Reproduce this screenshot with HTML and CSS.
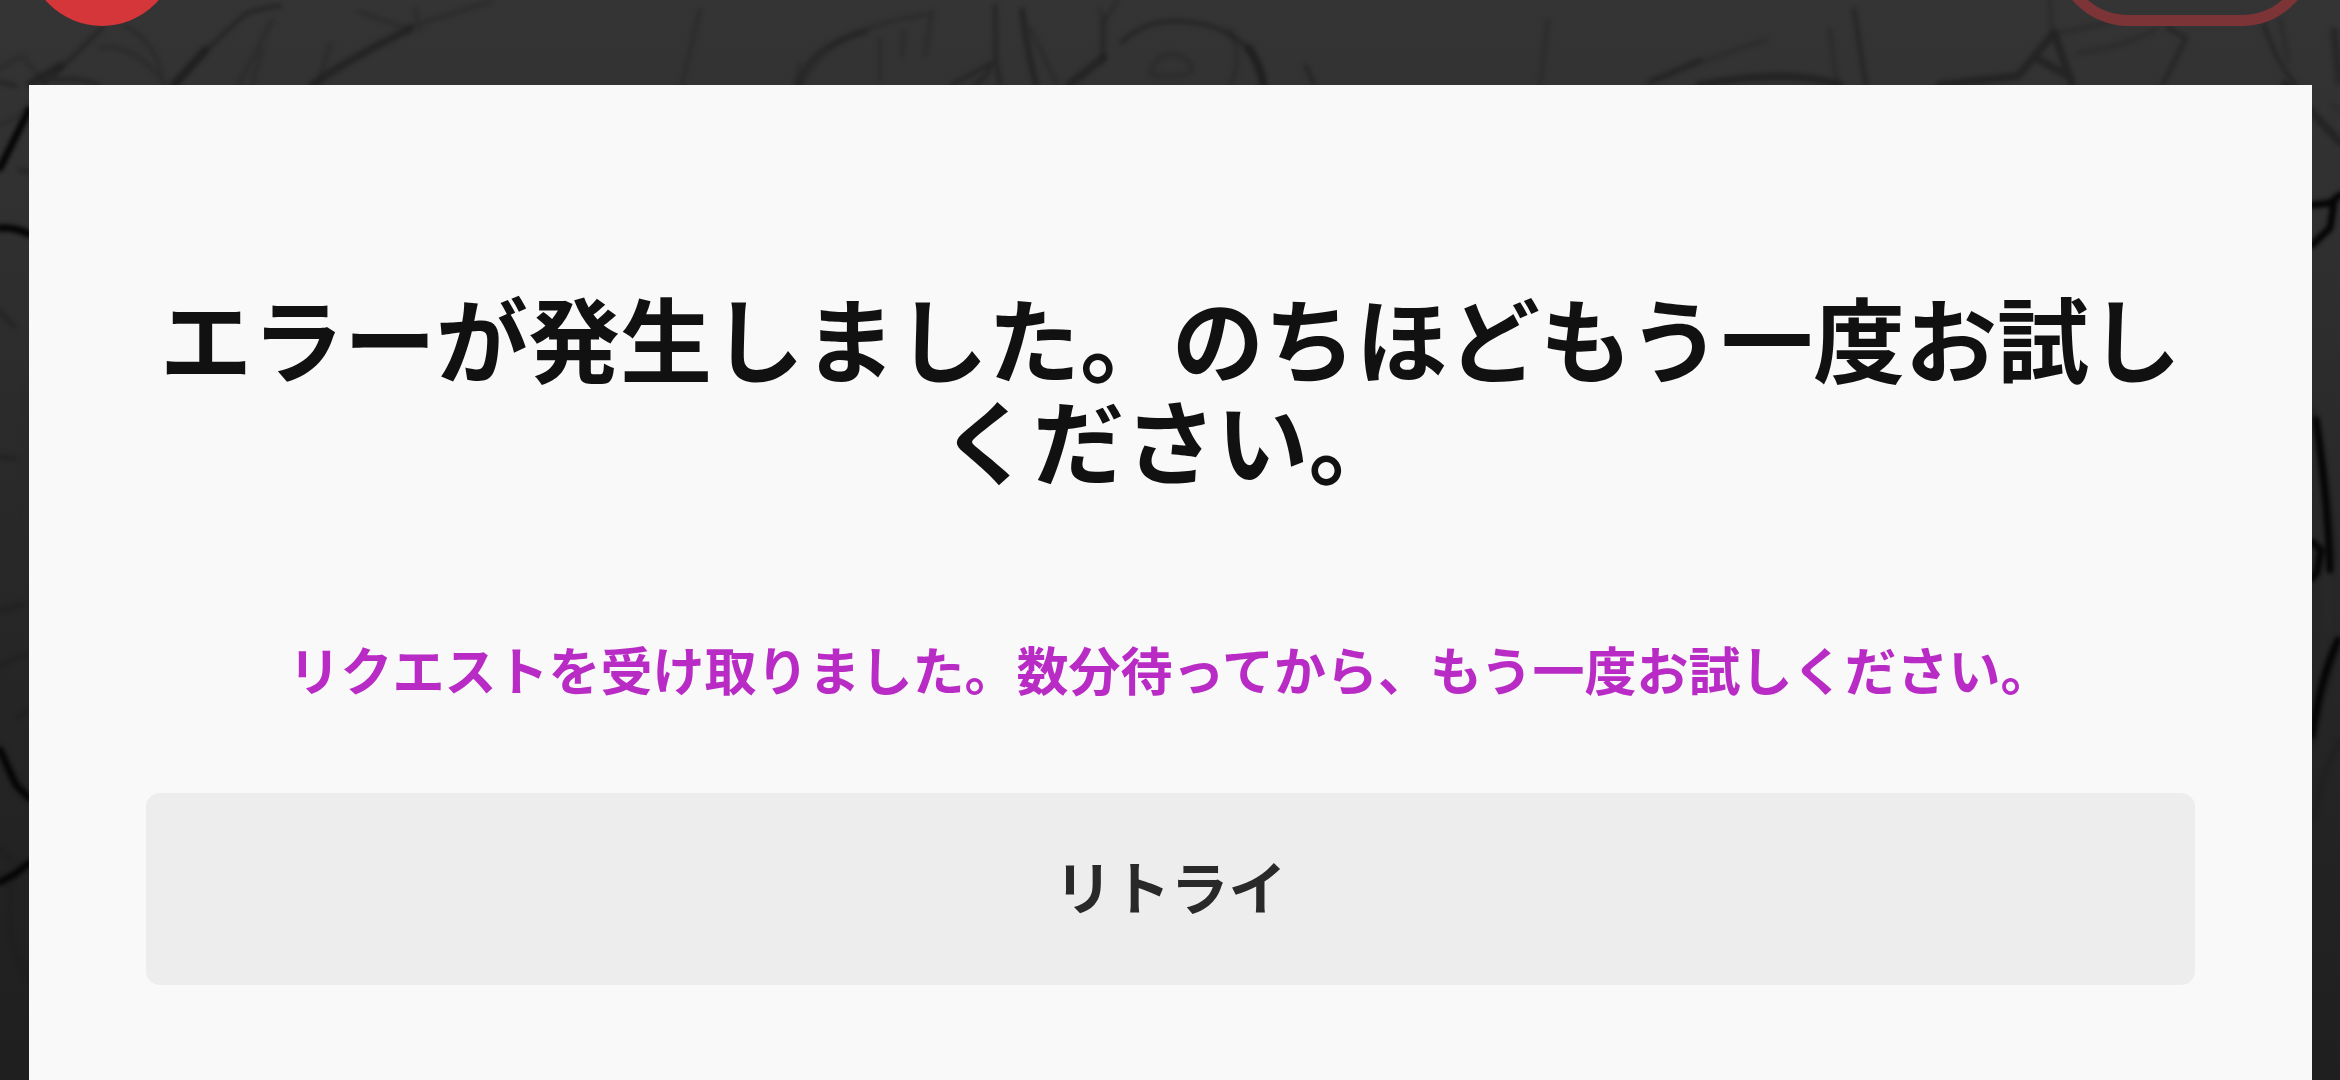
FILE: index.html
```
<!DOCTYPE html>
<html lang="ja">
<head>
  <meta charset="UTF-8">
  <title>エラーが発生しました</title>
  <meta name="viewport" content="width=device-width, initial-scale=1.0">
  <link rel="stylesheet" href="styles.css">
</head>
<body>
  <!-- Pencil sketch behind the dialog -->
  <svg class="backdrop" viewBox="0 0 2340 1080" preserveAspectRatio="none" aria-hidden="true">
    <g class="faint">
      <path d="M0 68 L22 56 L44 82 M100 48 Q135 43 165 84 M125 26 Q160 45 163 84" />
      <path d="M272 20 Q258 50 238 85 M262 50 L252 85 M330 45 L318 85" />
      <path d="M415 10 Q418 24 420 29 M360 12 L405 28 L490 2 M700 10 L682 85 M800 65 L796 85" />
      <path d="M802 85 Q825 28 930 14 M880 40 L880 78 M904 32 L902 55 M932 12 L925 55" />
      <path d="M1022 12 L1036 84 M1030 28 Q1045 60 1057 84 M1100 10 L1105 20 L1118 0" />
      <path d="M1150 74 Q1158 52 1172 55 Q1192 56 1192 72 Q1172 80 1150 74 M1230 30 Q1244 60 1230 84" />
      <path d="M1548 20 L1540 85 M1650 80 L1765 40 M1830 30 L1837 85 M2050 0 L2052 35 L2110 22 M2078 53 Q2120 48 2155 30 M2280 20 L2288 60 M2332 30 L2338 85" />
      <path d="M0 125 Q20 118 29 105 M24 390 L28 560" />
      <path d="M2332 105 L2340 110 M2328 570 V630" />
    </g>
    <g class="line">
      <path d="M44 84 Q65 65 102 28 M0 82 L15 86 M55 80 Q78 76 98 85" />
      <path d="M174 85 Q205 50 245 14 Q260 8 280 6" />
      <path d="M798 85 Q810 45 865 32 M953 84 L996 61 L995 6 M996 61 L1000 84 M975 84 Q989 76 990 66" />
      <path d="M1022 10 Q1026 50 1036 84 M1103 20 V58 M1122 42 Q1145 20 1178 21 Q1245 24 1262 75 L1263 84" />
      <path d="M1306 66 L1314 84 M1650 83 L1700 60 M1854 10 L1866 85 M2168 28 L2186 38 L2163 84" />
      <path d="M2264 25 Q2275 60 2295 84 M2335 30 L2340 80" />
      <path d="M20 170 L29 172 M0 610 Q15 607 22 605 M0 667 Q15 656 29 655 M17 718 L29 710 M0 850 L13 862 M0 457 L15 459" />
      <path d="M0 312 L14 326 M12 880 Q7 930 16 955 L29 980" />
      <path d="M2340 740 L2326 770 L2313 820 M2314 410 Q2330 490 2334 560" />
    </g>
    <g class="dark">
      <path d="M30 84 L60 66 M174 85 L205 50 M312 85 Q350 58 410 29" />
      <path d="M1070 84 L1103 58 M1249 48 Q1260 65 1263 84 M1700 85 Q1790 68 1840 85 M1940 85 L2018 76 L2054 33 L2072 84 M2034 57 L2070 77" />
      <path d="M2285 84 Q2310 110 2340 142 M2336 650 Q2324 680 2312 740" />
    </g>
    <g class="ink">
      <path d="M0 168 L29 110 M0 228 Q15 227 29 234 M0 750 L16 785 L29 798 M0 882 L15 874 L29 863" />
      <path d="M2312 205 L2330 203 L2340 195 M2312 245 L2330 228 L2334 203 M2316 420 Q2328 500 2330 570" />
      <path d="M2312 542 L2321 550 L2317 572 L2312 578 M2338 640 Q2320 680 2312 735" />
    </g>
  </svg>

  <div class="page">
    <header class="topbar" aria-hidden="true">
      <span class="logo"></span>
      <span class="menu-pill"></span>
    </header>

    <main class="dialog" role="alertdialog" aria-labelledby="errorTitle" aria-describedby="errorText">
      <h1 class="title" id="errorTitle">エラーが発生しました。のちほどもう一度お試しください。</h1>
      <p class="message" id="errorText">リクエストを受け取りました。数分待ってから、もう一度お試しください。</p>
      <button class="retry" type="button">リトライ</button>
    </main>
  </div>
</body>
</html>
```
FILE: styles.css
```
:root {
  --panel: #f9f9f9;
  --text: #111;
  --accent: #b82bc4;
  --red: #d43639;
}

* {
  box-sizing: border-box;
}

body {
  margin: 0;
  background: #222;
  color: var(--text);
  font-family: "Noto Sans CJK JP", sans-serif;
}

/* sketch */
.backdrop {
  position: absolute;
  top: 0;
  left: 0;
  width: 100%;
  height: 100%;
  background: linear-gradient(#343434, #303030 20%, #282828 50%, #1f1f1f);
}
.backdrop g {
  filter: blur(2px);
}
.backdrop path {
  fill: none;
  stroke-linecap: round;
  stroke-linejoin: round;
}
.faint {
  stroke: #2a2a2a;
  stroke-width: 5;
  opacity: 0.7;
}
.line {
  stroke: #1c1c1c;
  stroke-width: 5;
  opacity: 0.5;
}
.dark {
  stroke: #1b1b1b;
  stroke-width: 8;
  opacity: 0.6;
}
.ink {
  stroke: #050505;
  stroke-width: 7;
}

.page {
  position: relative;
  height: 100vh;
  overflow: hidden;
  display: flex;
  flex-direction: column;
}

/* top bar is scrolled mostly out of view */
.topbar {
  display: flex;
  justify-content: space-between;
  flex-shrink: 0;
  margin-top: -124px;
  padding: 0 24px 0 27px;
}
.logo {
  width: 150px;
  height: 150px;
  border-radius: 50%;
  background: var(--red);
}
.menu-pill {
  width: 262px;
  height: 150px;
  border: 11px solid #7d3436;
  border-radius: 75px;
}

.dialog {
  flex: 1 0 auto;
  margin: 59px 28px 0 29px;
  padding: 200px 117px 96px;
  background: var(--panel);
  text-align: center;
}
.title {
  margin: 0;
  font-size: 92px;
  line-height: 102px;
  font-weight: 700;
}
.message {
  margin: 144px 0 88px;
  color: var(--accent);
  font-size: 52px;
  line-height: 72px;
  font-weight: 700;
}
.retry {
  display: block;
  width: 100%;
  padding: 52px 24px 60px;
  border: none;
  border-radius: 14px;
  background: #ededed;
  color: #292929;
  font-family: inherit;
  font-size: 58px;
  line-height: 80px;
  font-weight: 700;
  cursor: pointer;
}
```
